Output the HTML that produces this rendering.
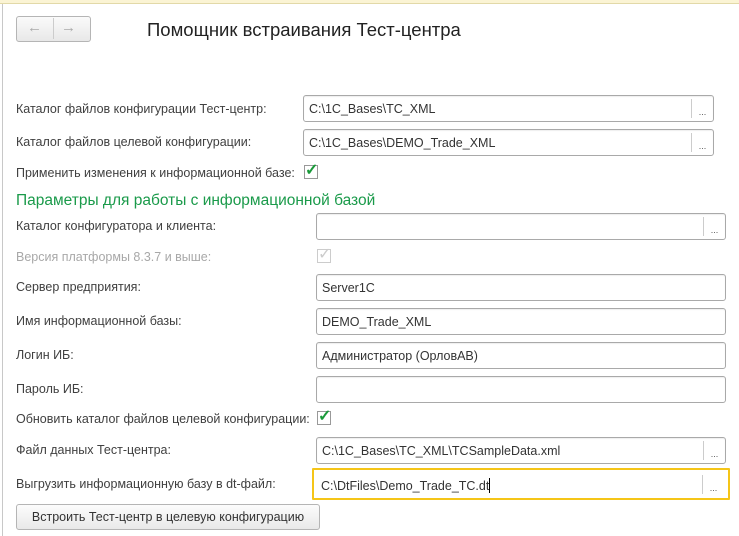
<!DOCTYPE html>
<html><head><meta charset="utf-8"><style>
body{margin:0;width:739px;height:536px;background:#fff;position:relative;overflow:hidden;font-family:"Liberation Sans",sans-serif;font-size:12.5px;color:#404040}
.a{position:absolute;white-space:nowrap}
.lbl{position:absolute;left:16px;white-space:nowrap;line-height:14px}
.in{position:absolute;height:27px;border:1px solid #a9a9a9;border-radius:3px;background:#fff;box-sizing:border-box;box-shadow:inset 0 1px 1px #eee}
.in span{position:absolute;left:5px;top:6px;color:#333;font-size:12.5px}
.in .b{position:absolute;right:0;top:3px;bottom:3px;width:21px;border-left:1px solid #ccc;font-size:9px;text-align:center;line-height:26px;color:#555}
.cb{position:absolute;width:12px;height:12px;border:1px solid #999;background:#fff}
</style></head><body>
<div class="a" style="left:0;top:0;width:739px;height:3px;background:#fbf4d4;border-bottom:1px solid #e2d9a8"></div>
<div class="a" style="left:2px;top:4px;width:1px;height:532px;background:#c8c8c8"></div>
<div class="a" style="left:16px;top:16px;width:73px;height:24px;border:1px solid #b5b5b5;border-radius:3px;background:linear-gradient(#fafafa,#e8e8e8)"></div>
<div class="a" style="left:53px;top:18px;width:1px;height:21px;background:#ccc"></div>
<div class="a" style="left:27px;top:19px;color:#aaa;font-size:15px">&#8592;</div>
<div class="a" style="left:61px;top:19px;color:#aaa;font-size:15px">&#8594;</div>
<div class="a" style="left:147px;top:19px;font-size:18.5px;color:#222">Помощник встраивания Тест-центра</div>

<div class="lbl" style="top:102px">Каталог файлов конфигурации Тест-центр:</div>
<div class="in" style="left:303px;top:95px;width:411px"><span>C:\1C_Bases\TC_XML</span><div class="b">...</div></div>
<div class="lbl" style="top:135px">Каталог файлов целевой конфигурации:</div>
<div class="in" style="left:303px;top:129px;width:411px"><span>C:\1C_Bases\DEMO_Trade_XML</span><div class="b">...</div></div>
<div class="lbl" style="top:166px">Применить изменения к информационной базе:</div>
<div class="cb" style="left:304px;top:165px"></div><div class="a" style="left:305px;top:160px;color:#1a9a3a;font-size:16px;font-weight:bold">✓</div>
<div class="a" style="left:16px;top:192px;color:#1a9a4a;font-size:15.5px">Параметры для работы с информационной базой</div>
<div class="lbl" style="top:219px">Каталог конфигуратора и клиента:</div>
<div class="in" style="left:316px;top:213px;width:410px"><div class="b">...</div></div>
<div class="lbl" style="top:250px;color:#a8a8a8">Версия платформы 8.3.7 и выше:</div>
<div class="cb" style="left:317px;top:249px;border-color:#ccc"></div><div class="a" style="left:318px;top:244px;color:#ccc;font-size:16px">✓</div>
<div class="lbl" style="top:280px">Сервер предприятия:</div>
<div class="in" style="left:316px;top:274px;width:410px"><span>Server1C</span></div>
<div class="lbl" style="top:314px">Имя информационной базы:</div>
<div class="in" style="left:316px;top:308px;width:410px"><span>DEMO_Trade_XML</span></div>
<div class="lbl" style="top:348px">Логин ИБ:</div>
<div class="in" style="left:316px;top:342px;width:410px"><span>Администратор (ОрловАВ)</span></div>
<div class="lbl" style="top:382px">Пароль ИБ:</div>
<div class="in" style="left:316px;top:376px;width:410px"></div>
<div class="lbl" style="top:412px">Обновить каталог файлов целевой конфигурации:</div>
<div class="cb" style="left:317px;top:411px"></div><div class="a" style="left:318px;top:406px;color:#1a9a3a;font-size:16px;font-weight:bold">✓</div>
<div class="lbl" style="top:443px">Файл данных Тест-центра:</div>
<div class="in" style="left:316px;top:437px;width:410px"><span>C:\1C_Bases\TC_XML\TCSampleData.xml</span><div class="b">...</div></div>
<div class="lbl" style="top:477px">Выгрузить информационную базу в dt-файл:</div>
<div class="a" style="left:312px;top:468px;width:414px;height:28px;border:2px solid #f5c518;border-radius:1px"></div>
<div class="in" style="left:315px;top:471px;width:410px;border-color:#fff;box-shadow:none"><span>C:\DtFiles\Demo_Trade_TC.dt<i style="display:inline-block;width:1px;height:15px;background:#000;vertical-align:-3px"></i></span><div class="b">...</div></div>
<div class="a" style="left:16px;top:504px;width:304px;height:26px;border:1px solid #b5b5b5;border-radius:3px;background:linear-gradient(#fcfcfc,#e9e9e9);box-sizing:border-box;text-align:center;line-height:24px;color:#333">Встроить Тест-центр в целевую конфигурацию</div>
</body></html>
